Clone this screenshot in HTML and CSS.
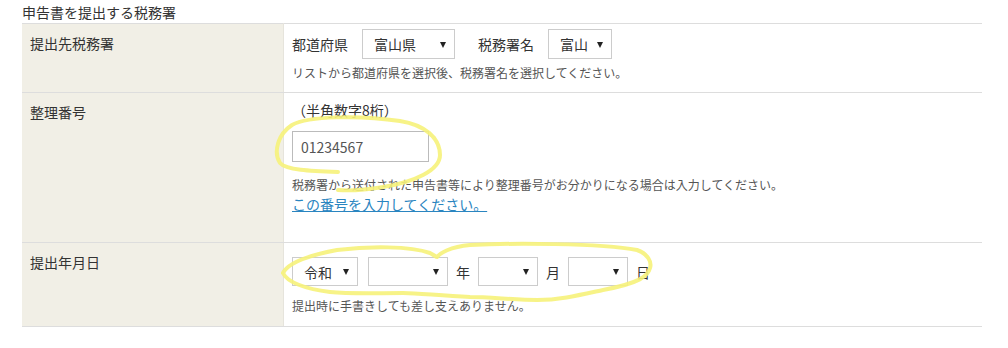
FILE: index.html
```html
<!DOCTYPE html>
<html lang="ja">
<head>
    <meta charset="UTF-8">
    <meta name="viewport" content="width=device-width, initial-scale=1.0">
    <title>申告書を提出する税務署</title>
    <link rel="stylesheet" href="styles.css">
</head>
<body>
<div class="page">

    <h2 class="section-title">申告書を提出する税務署</h2>

    <table class="form-table">
        <tr>
            <th>提出先税務署</th>
            <td>
                <div class="field-row">
                    <span class="field-label">都道府県</span>
                    <span class="sel sel-pref"><select><option>富山県</option></select></span>
                    <span class="field-label gap-left">税務署名</span>
                    <span class="sel sel-office"><select><option>富山</option></select></span>
                </div>
                <p class="note">リストから都道府県を選択後、税務署名を選択してください。</p>
            </td>
        </tr>
        <tr>
            <th>整理番号</th>
            <td class="cell-number">
                <div class="hint">（半角数字8桁）</div>
                <input type="text" class="text-input" value="01234567">
                <p class="note note-number">税務署から送付された申告書等により整理番号がお分かりになる場合は入力してください。</p>
                <a href="#" class="help-link">この番号を入力してください。</a>
            </td>
        </tr>
        <tr>
            <th>提出年月日</th>
            <td class="cell-date">
                <div class="field-row">
                    <span class="sel sel-era"><select><option>令和</option></select></span>
                    <span class="sel sel-year"><select><option></option></select></span>
                    <span class="unit">年</span>
                    <span class="sel sel-small"><select><option></option></select></span>
                    <span class="unit">月</span>
                    <span class="sel sel-small"><select><option></option></select></span>
                    <span class="unit">日</span>
                </div>
                <p class="note">提出時に手書きしても差し支えありません。</p>
            </td>
        </tr>
    </table>

    <!-- 手書きの丸印 -->
    <svg class="marker" viewBox="0 0 1008 348" width="1008" height="348">
        <path d="M338,172 C310,171 286,170 280,163 C273,152 278,134 292,125 C308,116 360,115 400,121 C425,125 440,138 440,155 C440,170 415,182 383,187 C365,190 350,191 338,190"/>
        <path d="M283,273 C287,265 300,257 337,250 C370,246 410,246 430,253 C434,255 436,257 437,257 C440,253 450,247 470,245 C510,243 600,243 637,250 C648,254 652,262 650,268 C648,276 640,283 603,290 C580,295 560,300 537,300 C515,300 490,297 470,297 C440,296 420,293 403,293 C375,293 350,294 330,292 C305,289 287,282 283,273"/>
    </svg>

</div>
</body>
</html>
```

FILE: styles.css
```css
body {
    margin: 0;
    font-family: "Noto Sans CJK JP", "Noto Sans", sans-serif;
    color: #333;
    background-color: #fff;
}
.page {
    position: relative;
    padding: 2px 26px 0 22px;
}
.section-title {
    margin: 0 0 1px;
    font-size: 14px;
    line-height: 20px;
    font-weight: normal;
    color: #333;
}
.form-table {
    width: 100%;
    border-collapse: collapse;
    border-top: 1px solid #ddd;
}
.form-table th,
.form-table td {
    vertical-align: top;
    border-bottom: 1px solid #ddd;
    font-size: 14px;
    line-height: 20px;
    font-weight: normal;
    text-align: left;
}
.form-table th {
    width: 253px;
    padding: 9px 0 0 8px;
    background-color: #f1efe6; /* 見出し列 */
    border-right: 1px solid #e6e4dc;
}
.form-table td {
    padding: 5px 8px 10px 8px;
}
.field-row {
    display: flex;
    align-items: center;
}
.field-label {
    margin-right: 14px;
}
.gap-left {
    margin-left: 23px;
}
.unit {
    margin: 0 8px;
}
.sel {
    position: relative;
    display: inline-block;
    height: 30px;
    box-sizing: border-box;
}
.sel select {
    appearance: none;
    -webkit-appearance: none;
    width: 100%;
    height: 100%;
    box-sizing: border-box;
    border: 1px solid #ccc;
    border-radius: 0;
    background-color: #fff;
    font-family: inherit;
    font-size: 14px;
    color: #333;
    padding: 0 20px 0 11px;
    margin: 0;
}
.sel::after {
    content: "";
    position: absolute;
    right: 9px;
    top: 13px;
    border-left: 3.5px solid transparent;
    border-right: 3.5px solid transparent;
    border-top: 6px solid #222;
    pointer-events: none;
}
.sel-pref { width: 93px; }
.sel-office { width: 64px; }
.cell-date .sel { height: 29px; }
.cell-date .sel::after { top: 12px; }
.sel-era { width: 66px; }
.sel-year { width: 80px; margin-left: 10px; }
.sel-small { width: 60px; }
.note {
    margin: 5px 0 0;
    font-size: 12px;
    line-height: 18px;
    color: #555;
}
.cell-number {
    padding-top: 7px !important;
    padding-bottom: 28px !important;
}
.hint {
    margin-bottom: 11px;
}
.text-input {
    display: block;
    width: 137px;
    height: 31px;
    box-sizing: border-box;
    border: 1px solid #bbb;
    padding: 0 8px;
    font-family: inherit;
    font-size: 14px;
    color: #555;
    margin: 0;
}
.note-number {
    margin-top: 14px;
}
.help-link {
    color: #2a85c0;
    text-decoration: underline;
}
.cell-date {
    padding-top: 14px !important;
    padding-bottom: 11px !important;
}
.cell-date .note {
    margin-top: 11px;
}
.marker {
    position: absolute;
    left: 0;
    top: 0;
    pointer-events: none;
}
.marker path {
    fill: none;
    stroke: #f6f27a;
    stroke-width: 4;
    stroke-linecap: round;
    opacity: 0.9;
}
```
